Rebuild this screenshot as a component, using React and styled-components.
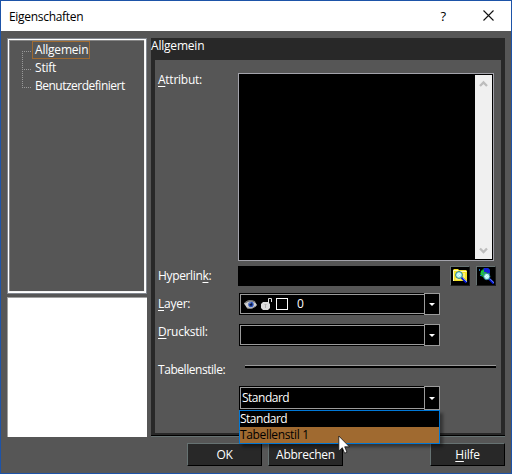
import React from "react";
import styled, { createGlobalStyle } from "styled-components";

function PropertiesDialog() {
  return (
    <Window>
      <GlobalStyle />
      <TitleBar>
        <Text>Eigenschaften</Text>
        <TitleActions>
          <HelpMark>?</HelpMark>
          <CloseIcon />
        </TitleActions>
      </TitleBar>

      <Body>
        <SideColumn>
          <Tree>
            <TreeItem>
              <Branch $first />
              <TreeLabel $selected>Allgemein</TreeLabel>
            </TreeItem>
            <TreeItem>
              <Branch />
              <TreeLabel>Stift</TreeLabel>
            </TreeItem>
            <TreeItem>
              <Branch $last />
              <TreeLabel $gap="-0.5px">Benutzerdefiniert</TreeLabel>
            </TreeItem>
          </Tree>
          <Preview />
        </SideColumn>

        <Panel>
          <PanelTitle>Allgemein</PanelTitle>
          <PanelBody>
            <Row $height="188px" $top="13px">
              <Label $lift="-3px">
                <u>A</u>ttribut:
              </Label>
              <TextArea>
                <ScrollBar>
                  <Chevron />
                  <Chevron $down />
                </ScrollBar>
              </TextArea>
            </Row>
            <Row $height="20px" $top="5px">
              <Label $gap="-0.35px">
                Hyperlin<u>k</u>:
              </Label>
              <LinkField />
              <IconButton $left="10px">
                <FolderSearchIcon />
              </IconButton>
              <IconButton $left="6px">
                <WebSearchIcon />
              </IconButton>
            </Row>
            <Row $height="22px" $top="7px">
              <Label $lift="1px">
                <u>L</u>ayer:
              </Label>
              <Combo>
                <ComboValue>
                  <EyeIcon />
                  <LockIcon />
                  <Swatch />
                  <span>0</span>
                </ComboValue>
                <DropButton />
              </Combo>
            </Row>
            <Row $height="22px" $top="9px">
              <Label $lift="-2px">
                <u>D</u>ruckstil:
              </Label>
              <Combo>
                <ComboValue />
                <DropButton />
              </Combo>
            </Row>
            <Row $height="20px" $top="13px">
              <Label $gap="-0.45px" $lift="1px">
                Tabellenstile:
              </Label>
              <Rule />
            </Row>
            <Row $height="24px" $top="7px">
              <Label />
              <Combo>
                <ComboValue>Standard</ComboValue>
                <DropButton />
                <Options>
                  <Option>Standard</Option>
                  <Option $active>Tabellenstil 1</Option>
                </Options>
              </Combo>
            </Row>
          </PanelBody>
        </Panel>
      </Body>

      <Footer>
        <Button>OK</Button>
        <Button $left="6px">Abbrechen</Button>
        <Button $left="87px">
          <u>H</u>ilfe
        </Button>
      </Footer>
      <Cursor />
    </Window>
  );
}

export default PropertiesDialog;

function CloseIcon() {
  return (
    <svg width="11" height="11" viewBox="0 0 11 11">
      <path d="M.5 .5l10 10M10.5 .5l-10 10" stroke="#111" strokeWidth="1.1" />
    </svg>
  );
}

function Chevron({ $down }) {
  return (
    <svg width="9" height="8" viewBox="0 0 9 8">
      <path
        d={$down ? "M1 1.5L4.5 5L8 1.5" : "M1 6L4.5 2.5L8 6"}
        fill="none"
        stroke="#bdbdbd"
        strokeWidth="2.3"
      />
    </svg>
  );
}

function Magnifier() {
  return (
    <>
      <path d="M9.5 9.5l5 5" stroke="#0818d8" strokeWidth="2.4" />
      <path d="M10.5 9.5l4.5 4.5" stroke="#8fb8ff" strokeWidth=".8" />
      <circle cx="7" cy="7" r="3.4" fill="#aef4f4" stroke="#287c8c" />
      <path d="M5 7.5l2.5-2.5M6.5 8.5l2-2" stroke="#fff" />
    </>
  );
}

function FolderSearchIcon() {
  return (
    <svg width="16" height="16" viewBox="0 0 16 16">
      <path d="M1 13V2l1-1h4l1 1h7l1 1v10z" fill="#f5e528" />
      <path
        d="M1.5 13V2.5h5M8 3.5h6.5M12 5v5M3.5 11h5"
        fill="none"
        stroke="#fffbc0"
      />
      <Magnifier />
    </svg>
  );
}

function WebSearchIcon() {
  return (
    <svg width="16" height="16" viewBox="0 0 16 16">
      <path d="M3 3l3-3h4l2 2v4L8 9H4L2 6z" fill="#0a8a28" />
      <path d="M6 0h4l2 2v3l-2 1-2-2H5z" fill="#1420d8" />
      <path d="M3 3l3-1v2l3 1-2 3-4-1z" fill="#20c83c" />
      <path d="M1.5 1v2M2 7.5h2M4.5 5h2" stroke="#1870b8" />
      <g transform="translate(2.3 2) scale(.93)">
        <Magnifier />
      </g>
    </svg>
  );
}

function EyeIcon() {
  return (
    <svg width="13" height="11" viewBox="0 0 13 11">
      <path d="M0 4.5Q5-1 11 3l2 3Q9 11 3 9z" fill="#d0d0d0" />
      <path d="M1 4Q5 0 11 3" fill="none" stroke="#777" strokeWidth="1.6" />
      <path d="M3 9Q8 11 12 7" fill="none" stroke="#888" />
      <circle cx="7" cy="5.5" r="2.7" fill="#2850b8" />
      <circle cx="7" cy="5.5" r="1.3" fill="#071238" />
      <path d="M5.5 4h1" stroke="#fff" />
    </svg>
  );
}

function LockIcon() {
  return (
    <svg width="12" height="13" viewBox="0 0 12 13">
      <path d="M7.5 5V.5h3V4" fill="none" stroke="#e0e0e0" />
      <path d="M0 6l2-2h5l2 2v4l-2 2H2l-2-2z" fill="#dadada" />
      <path d="M3.5 6.5h2M4.5 6v4" stroke="#b0b0b0" />
    </svg>
  );
}

function Cursor() {
  return (
    <CursorSvg width="13" height="20" viewBox="0 0 13 20">
      <path
        d="M.8 1v15l3.5-3.3 2.3 5.5 2.4-1-2.3-5.4h4.7z"
        fill="#fff"
        stroke="#111"
        strokeWidth=".8"
      />
    </CursorSvg>
  );
}

const GlobalStyle = createGlobalStyle`
  * {
    box-sizing: border-box;
  }

  body {
    margin: 0;
    font-family: "Open Sans", "Noto Sans", sans-serif;
    font-size: 12px;
    line-height: 16px;
    overflow: hidden;
  }

  svg {
    display: block;
    flex: none;
  }

  u {
    text-decoration: underline;
    text-decoration-skip-ink: none;
    text-underline-offset: 2px;
  }
`;

const Window = styled.div`
  position: relative;
  display: flex;
  flex-direction: column;
  width: 512px;
  height: 474px;

  background: #565656;
  border: 1px solid #1d53a8;
  color: #fff;
`;

const Text = styled.span`
  padding-top: 1px;

  white-space: nowrap;
  letter-spacing: -0.3px;
`;

const TitleBar = styled.header`
  display: flex;
  justify-content: space-between;
  align-items: center;
  height: 30px;
  padding: 0 17px 0 8px;

  background: #fff;
  color: #000;
`;

const TitleActions = styled.div`
  display: flex;
  align-items: center;
  gap: 37px;
  margin-top: -1px;
`;

const HelpMark = styled.span`
  font-size: 13px;
`;

const Body = styled.main`
  display: flex;
  gap: 4px;
  height: 399px;
  margin: 7px 6px 0;
`;

const SideColumn = styled.aside`
  display: flex;
  flex-direction: column;
  gap: 3px;
  width: 140px;
`;

const Tree = styled.div`
  height: 256px;
  padding: 2px 0 0 12px;

  background: #565656;
  border: 1px solid #82878f;
  box-shadow: inset 0 0 0 1px #fff, inset -2px -2px 0 #f4f4f4,
    inset 2px 2px 0 #858585;
`;

const TreeItem = styled.div`
  display: flex;
  height: 18px;
`;

const Branch = styled.span`
  width: 12px;
  margin-left: 2px;

  background-image: repeating-linear-gradient(
      90deg,
      #999 0 1px,
      transparent 1px 2px
    ),
    repeating-linear-gradient(#999 0 1px, transparent 1px 2px);
  background-repeat: no-repeat;
  background-size: 9px 1px, 1px ${({ $first, $last }) =>
    $first ? "8px" : $last ? "10px" : "18px"};
  background-position: 0 10px, 0 ${({ $first }) => ($first ? "10px" : "0")};
`;

const TreeLabel = styled.span`
  height: 18px;
  margin-left: -2px;
  padding: 0 1px 0 2px;

  line-height: 16px;
  white-space: nowrap;
  letter-spacing: ${({ $gap }) => $gap || "-0.2px"};
  border: 1px solid ${({ $selected }) => ($selected ? "#a06a30" : "transparent")};
`;

const Preview = styled.div`
  height: 140px;

  background: #fff;
  border-top: 1px solid #a0a0a0;
  border-left: 1px solid #a0a0a0;
`;

const Panel = styled.section`
  width: 354px;
  padding: 0 4px;

  background: #282828;
  border-bottom: 1px solid #667272;
  box-shadow: inset 0 -1px 0 #000;
`;

const PanelTitle = styled.div`
  height: 22px;
  margin-left: -4px;

  letter-spacing: -0.2px;
`;

const PanelBody = styled.div`
  height: 373px;
  padding: 13px 0 0 3px;

  background: #565656;
`;

const Row = styled.div`
  display: flex;
  height: ${({ $height }) => $height};

  &:not(:first-child) {
    margin-top: ${({ $top }) => $top};
  }
`;

const Label = styled.label`
  width: 81px;
  padding-top: 2px;

  white-space: nowrap;
  letter-spacing: ${({ $gap }) => $gap || "-0.25px"};
  transform: translateY(${({ $lift }) => $lift || "0"});
`;

const TextArea = styled.div`
  display: flex;
  justify-content: flex-end;
  width: 256px;
  margin-left: -1px;
  padding: 1px;

  background: #000;
  border: 1px solid #a3a3ab;
`;

const ScrollBar = styled.div`
  display: flex;
  flex-direction: column;
  justify-content: space-between;
  align-items: center;
  width: 17px;
  padding: 5px 0 4px;

  background: #f0f0f0;
`;

const LinkField = styled.div`
  width: 202px;
  margin-left: -1px;

  background: #000;
`;

const IconButton = styled.button`
  display: flex;
  justify-content: center;
  align-items: center;
  width: 20px;
  height: 20px;
  margin-left: ${({ $left }) => $left};
  padding: 0;

  background: #000;
  border: 1px solid;
  border-color: #667272 #1c1c1c #1c1c1c #667272;
`;

const Combo = styled.div`
  position: relative;
  display: flex;
  width: 201px;

  background: #000;
`;

const ComboValue = styled.div`
  display: flex;
  align-items: center;
  gap: 3px;
  width: 184px;
  margin: 1px 0 1px 1px;
  padding: 0 0 0 1px;

  letter-spacing: -0.5px;
  border: 1px solid #9b9b9b;
  border-right: 0;

  span {
    margin-left: 6px;
  }

  svg {
    margin-left: 2px;
  }

  svg + svg {
    margin-left: 1px;
  }
`;

const DropButton = styled.span`
  display: flex;
  justify-content: center;
  align-items: center;
  width: 16px;

  border: 1px solid #9b9b9b;

  &::after {
    content: "";
    border: 3px solid transparent;
    border-top-color: #fff;
    border-bottom: 0;
  }
`;

const Swatch = styled.i`
  width: 12px;
  height: 12px;

  border: 1px solid #fff;
`;

const Rule = styled.div`
  width: 251px;
  height: 3px;
  margin: 6px 0 0 6px;

  background: #000;
  border-top: 1px solid #999;
`;

const Options = styled.div`
  position: absolute;
  z-index: 1;
  top: 24px;
  left: 0;
  width: 201px;

  background: #000;
  border: 1px solid #0078d7;
  box-shadow: 3px 3px 3px rgba(0, 0, 0, 0.4);
`;

const Option = styled.div`
  height: 16px;

  letter-spacing: ${({ $active }) => ($active ? "-0.35px" : "-0.5px")};
  background: ${({ $active }) => ($active ? "#a06a30" : "#000")};
  color: ${({ $active }) => ($active ? "#000" : "#fff")};
`;

const Footer = styled.footer`
  display: flex;
  height: 23px;
  margin: 6px 0 0 186px;
`;

const Button = styled.button`
  width: 75px;
  height: 23px;
  margin-left: ${({ $left }) => $left || "0"};
  padding: 0;

  font: inherit;
  letter-spacing: -0.25px;
  background: #282828;
  border: 1px solid;
  border-color: #667272 #000 #000 #667272;
  color: #fff;
`;

const CursorSvg = styled.svg`
  position: absolute;
  z-index: 2;
  top: 434px;
  left: 337px;
`;
